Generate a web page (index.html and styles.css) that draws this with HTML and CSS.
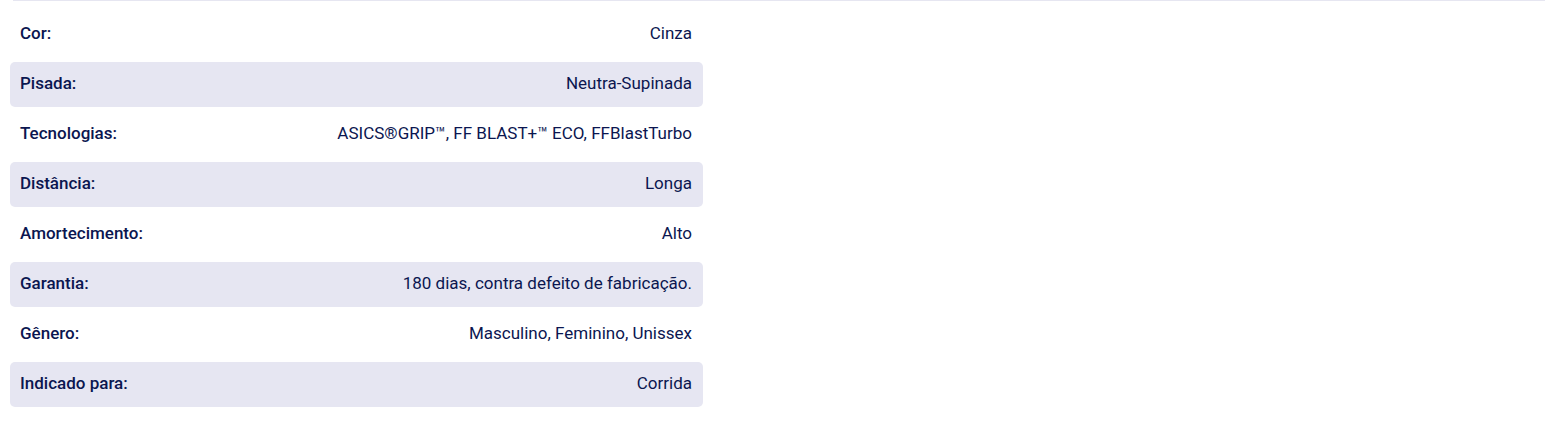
FILE: index.html
```html
<!DOCTYPE html>
<html lang="pt-BR">
<head>
<meta charset="utf-8">
<link rel="stylesheet" href="styles.css">
</head>
<body>
<div class="divider"></div>
<div class="specs">
  <div class="row"><span class="label">Cor:</span><span class="value">Cinza</span></div>
  <div class="row alt"><span class="label">Pisada:</span><span class="value">Neutra-Supinada</span></div>
  <div class="row"><span class="label">Tecnologias:</span><span class="value">ASICS®GRIP™, FF BLAST+™ ECO, FFBlastTurbo</span></div>
  <div class="row alt"><span class="label">Distância:</span><span class="value">Longa</span></div>
  <div class="row"><span class="label">Amortecimento:</span><span class="value">Alto</span></div>
  <div class="row alt"><span class="label">Garantia:</span><span class="value">180 dias, contra defeito de fabricação.</span></div>
  <div class="row"><span class="label">Gênero:</span><span class="value">Masculino, Feminino, Unissex</span></div>
  <div class="row alt"><span class="label">Indicado para:</span><span class="value">Corrida</span></div>
</div>
</body>
</html>
```
FILE: styles.css
```css
html, body {
  margin: 0;
  padding: 0;
  background: #ffffff;
}
body {
  font-family: Roboto, "Liberation Sans", sans-serif;
  color: #0b1650;
}
.divider {
  height: 1px;
  margin-left: 13px;
  background: #e6e6f1;
}
.specs {
  display: flex;
  flex-direction: column;
  gap: 5px;
  width: 693px;
  margin: 11px 0 0 10px;
}
.row {
  display: flex;
  justify-content: space-between;
  align-items: center;
  height: 45px;
  padding: 0 11px 4px 10px;
  box-sizing: border-box;
  border-radius: 5px;
  line-height: 20px;
}
.row.alt {
  background: #e6e6f2;
}
.label {
  font-size: 17px;
  font-weight: 500;
  letter-spacing: 0;
}
.value {
  font-size: 17px;
  font-weight: 400;
  letter-spacing: 0;
}
```
